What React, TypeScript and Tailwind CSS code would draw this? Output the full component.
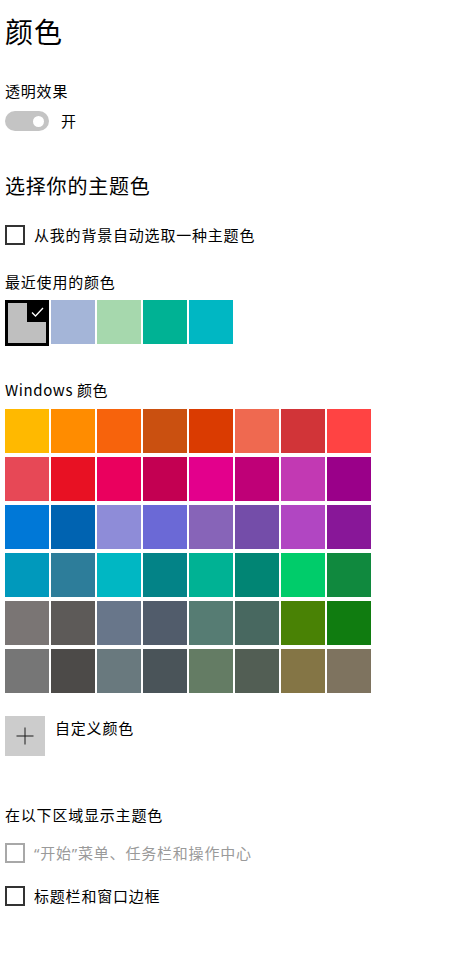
const windowsColors = [
  ["#FFB900", "#FF8C00", "#F7630C", "#CA5010", "#DA3B01", "#EF6950", "#D13438", "#FF4343"],
  ["#E74856", "#E81123", "#EA005E", "#C30052", "#E3008C", "#BF0077", "#C239B3", "#9A0089"],
  ["#0078D7", "#0063B1", "#8E8CD8", "#6B69D6", "#8764B8", "#744DA9", "#B146C2", "#881798"],
  ["#0099BC", "#2D7D9A", "#00B7C3", "#038387", "#00B294", "#018574", "#00CC6A", "#10893E"],
  ["#7A7574", "#5D5A58", "#68768A", "#515C6B", "#567C73", "#486860", "#498205", "#107C10"],
  ["#767676", "#4C4A48", "#69797E", "#4A5459", "#647C64", "#525E54", "#847545", "#7E735F"],
];

const recentColors = ["#A4B5D8", "#A6D8AD", "#00B294", "#00B7C3"];

const font = { fontFamily: '"Noto Sans CJK SC", "Noto Sans", sans-serif' };
const latin = { fontFamily: '"Noto Sans", sans-serif' };

function Checkbox({ label, disabled }: { label: React.ReactNode; disabled?: boolean }) {
  return (
    <div className="flex items-center gap-[9px]">
      <div
        className={
          disabled
            ? "h-5 w-5 border-2 border-[#a8a8a8]"
            : "h-5 w-5 border-2 border-[#333333]"
        }
      />
      <span
        className={
          disabled
            ? "text-[15px] leading-5 tracking-[0.8px] text-[#9a9a9a]"
            : "text-[15px] leading-5 tracking-[0.8px] text-black"
        }
      >
        {label}
      </span>
    </div>
  );
}

export default function App() {
  return (
    <div className="min-h-[968px] bg-white pl-[5px] pt-[13px] text-black" style={font}>
      <h1 className="text-[28px] font-normal leading-[36px] tracking-[1px]">颜色</h1>

      <p className="mt-[32px] text-[15px] leading-5 tracking-[0.8px]">透明效果</p>
      <div className="mt-[10px] flex items-center gap-[12px]">
        <div className="flex h-5 w-[44px] items-center justify-end rounded-full bg-[#c4c4c4] pr-[5px]">
          <div className="h-[11px] w-[11px] rounded-full bg-white" />
        </div>
        <span className="text-[15px] leading-5">开</span>
      </div>

      <h2 className="mt-[41px] text-[20px] font-normal leading-[28px] tracking-[0.8px]">选择你的主题色</h2>

      <div className="mt-[25px]">
        <Checkbox label="从我的背景自动选取一种主题色" />
      </div>

      <p className="mt-[27px] text-[15px] leading-5 tracking-[0.8px]">最近使用的颜色</p>
      <div className="mt-[8px] flex gap-[2px]">
        <div className="relative h-[46px] w-[44px] border-[3px] border-black bg-[#bfbfbf]">
          <div className="absolute -right-[1px] -top-[1px] flex h-[20px] w-[20px] items-center justify-center bg-black">
            <svg width="13" height="10" viewBox="0 0 13 10" fill="none">
              <path d="M1 5.5 L4.5 9 L12 1" stroke="white" strokeWidth="1.3" />
            </svg>
          </div>
        </div>
        {recentColors.map((c) => (
          <div key={c} className="h-[44px] w-[44px]" style={{ backgroundColor: c }} />
        ))}
      </div>

      <p className="mt-[34px] text-[15px] leading-5 tracking-[0.6px]">Windows 颜色</p>
      <div className="mt-[9px] flex flex-col gap-[4px]">
        {windowsColors.map((row, i) => (
          <div key={i} className="flex gap-[2px]">
            {row.map((c) => (
              <div key={c} className="h-[44px] w-[44px]" style={{ backgroundColor: c }} />
            ))}
          </div>
        ))}
      </div>

      <div className="mt-[23px] flex items-start gap-[10px]">
        <div className="flex h-10 w-10 items-center justify-center bg-[#cccccc]">
          <svg width="18" height="18" viewBox="0 0 18 18">
            <path d="M9 0.5 V17.5 M0.5 9 H17.5" stroke="#1a1a1a" strokeWidth="1" />
          </svg>
        </div>
        <span className="mt-[2px] text-[15px] leading-5 tracking-[0.8px]">自定义颜色</span>
      </div>

      <p className="mt-[49px] text-[15px] leading-5 tracking-[0.8px]">在以下区域显示主题色</p>
      <div className="mt-[18px]">
        <Checkbox
          label={
            <>
              <span style={latin}>“</span>开始<span style={latin}>”</span>菜单、任务栏和操作中心
            </>
          }
          disabled
        />
      </div>
      <div className="mt-[23px]">
        <Checkbox label="标题栏和窗口边框" />
      </div>
    </div>
  );
}
